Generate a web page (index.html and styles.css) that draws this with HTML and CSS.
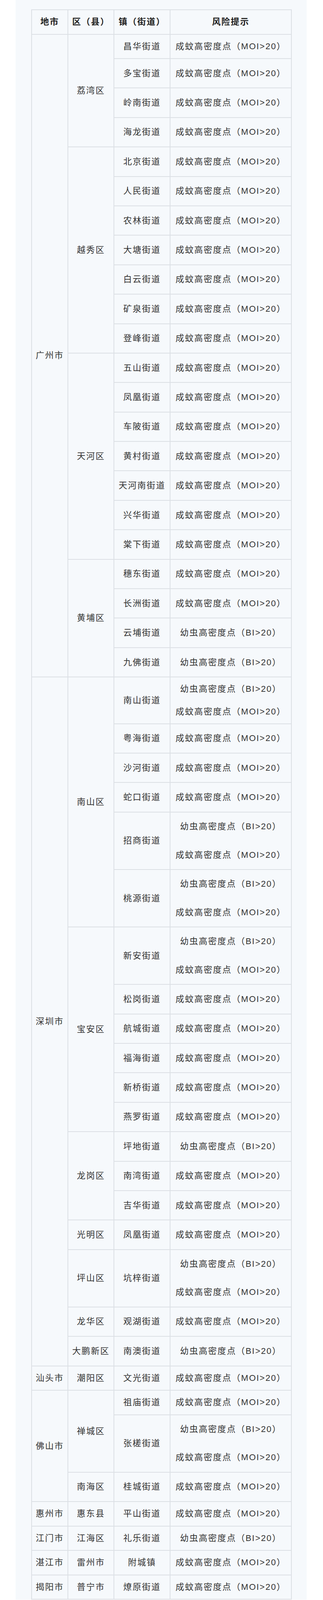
FILE: index.html
```html
<!DOCTYPE html>
<html lang="zh-CN">
<head>
<meta charset="utf-8">
<title>蚊媒密度风险提示</title>
<link rel="stylesheet" href="styles.css">
</head>
<body>
<div class="panel">
<div class="risk" role="table">
<div class="cell hd">地市</div><div class="cell hd">区（县）</div><div class="cell hd">镇（街道）</div><div class="cell hd">风险提示</div>

<div class="cell rs22">广州市</div><div class="cell rs4">荔湾区</div><div class="cell">昌华街道</div><div class="cell">成蚊高密度点（MOI&gt;20）</div>
<div class="cell">多宝街道</div><div class="cell">成蚊高密度点（MOI&gt;20）</div>
<div class="cell">岭南街道</div><div class="cell">成蚊高密度点（MOI&gt;20）</div>
<div class="cell">海龙街道</div><div class="cell">成蚊高密度点（MOI&gt;20）</div>
<div class="cell rs7">越秀区</div><div class="cell">北京街道</div><div class="cell">成蚊高密度点（MOI&gt;20）</div>
<div class="cell">人民街道</div><div class="cell">成蚊高密度点（MOI&gt;20）</div>
<div class="cell">农林街道</div><div class="cell">成蚊高密度点（MOI&gt;20）</div>
<div class="cell">大塘街道</div><div class="cell">成蚊高密度点（MOI&gt;20）</div>
<div class="cell">白云街道</div><div class="cell">成蚊高密度点（MOI&gt;20）</div>
<div class="cell">矿泉街道</div><div class="cell">成蚊高密度点（MOI&gt;20）</div>
<div class="cell">登峰街道</div><div class="cell">成蚊高密度点（MOI&gt;20）</div>
<div class="cell rs7">天河区</div><div class="cell">五山街道</div><div class="cell">成蚊高密度点（MOI&gt;20）</div>
<div class="cell">凤凰街道</div><div class="cell">成蚊高密度点（MOI&gt;20）</div>
<div class="cell">车陂街道</div><div class="cell">成蚊高密度点（MOI&gt;20）</div>
<div class="cell">黄村街道</div><div class="cell">成蚊高密度点（MOI&gt;20）</div>
<div class="cell">天河南街道</div><div class="cell">成蚊高密度点（MOI&gt;20）</div>
<div class="cell">兴华街道</div><div class="cell">成蚊高密度点（MOI&gt;20）</div>
<div class="cell">棠下街道</div><div class="cell">成蚊高密度点（MOI&gt;20）</div>
<div class="cell rs4">黄埔区</div><div class="cell">穗东街道</div><div class="cell">成蚊高密度点（MOI&gt;20）</div>
<div class="cell">长洲街道</div><div class="cell">成蚊高密度点（MOI&gt;20）</div>
<div class="cell">云埔街道</div><div class="cell">幼虫高密度点（BI&gt;20）</div>
<div class="cell">九佛街道</div><div class="cell">幼虫高密度点（BI&gt;20）</div>

<div class="cell rs19">深圳市</div><div class="cell rs6">南山区</div><div class="cell">南山街道</div><div class="cell dual"><span>幼虫高密度点（BI&gt;20）</span><span>成蚊高密度点（MOI&gt;20）</span></div>
<div class="cell">粤海街道</div><div class="cell">成蚊高密度点（MOI&gt;20）</div>
<div class="cell">沙河街道</div><div class="cell">成蚊高密度点（MOI&gt;20）</div>
<div class="cell">蛇口街道</div><div class="cell">成蚊高密度点（MOI&gt;20）</div>
<div class="cell">招商街道</div><div class="cell dual"><span>幼虫高密度点（BI&gt;20）</span><span>成蚊高密度点（MOI&gt;20）</span></div>
<div class="cell">桃源街道</div><div class="cell dual"><span>幼虫高密度点（BI&gt;20）</span><span>成蚊高密度点（MOI&gt;20）</span></div>
<div class="cell rs6">宝安区</div><div class="cell">新安街道</div><div class="cell dual"><span>幼虫高密度点（BI&gt;20）</span><span>成蚊高密度点（MOI&gt;20）</span></div>
<div class="cell">松岗街道</div><div class="cell">成蚊高密度点（MOI&gt;20）</div>
<div class="cell">航城街道</div><div class="cell">成蚊高密度点（MOI&gt;20）</div>
<div class="cell">福海街道</div><div class="cell">成蚊高密度点（MOI&gt;20）</div>
<div class="cell">新桥街道</div><div class="cell">成蚊高密度点（MOI&gt;20）</div>
<div class="cell">燕罗街道</div><div class="cell">成蚊高密度点（MOI&gt;20）</div>
<div class="cell rs3">龙岗区</div><div class="cell">坪地街道</div><div class="cell">幼虫高密度点（BI&gt;20）</div>
<div class="cell">南湾街道</div><div class="cell">成蚊高密度点（MOI&gt;20）</div>
<div class="cell">吉华街道</div><div class="cell">成蚊高密度点（MOI&gt;20）</div>
<div class="cell">光明区</div><div class="cell">凤凰街道</div><div class="cell">成蚊高密度点（MOI&gt;20）</div>
<div class="cell">坪山区</div><div class="cell">坑梓街道</div><div class="cell dual"><span>幼虫高密度点（BI&gt;20）</span><span>成蚊高密度点（MOI&gt;20）</span></div>
<div class="cell">龙华区</div><div class="cell">观湖街道</div><div class="cell">成蚊高密度点（MOI&gt;20）</div>
<div class="cell">大鹏新区</div><div class="cell">南澳街道</div><div class="cell">幼虫高密度点（BI&gt;20）</div>

<div class="cell">汕头市</div><div class="cell">潮阳区</div><div class="cell">文光街道</div><div class="cell">成蚊高密度点（MOI&gt;20）</div>

<div class="cell rs3">佛山市</div><div class="cell rs2">禅城区</div><div class="cell">祖庙街道</div><div class="cell">成蚊高密度点（MOI&gt;20）</div>
<div class="cell">张槎街道</div><div class="cell dual"><span>幼虫高密度点（BI&gt;20）</span><span>成蚊高密度点（MOI&gt;20）</span></div>
<div class="cell">南海区</div><div class="cell">桂城街道</div><div class="cell">成蚊高密度点（MOI&gt;20）</div>

<div class="cell">惠州市</div><div class="cell">惠东县</div><div class="cell">平山街道</div><div class="cell">成蚊高密度点（MOI&gt;20）</div>
<div class="cell">江门市</div><div class="cell">江海区</div><div class="cell">礼乐街道</div><div class="cell">幼虫高密度点（BI&gt;20）</div>
<div class="cell">湛江市</div><div class="cell">雷州市</div><div class="cell">附城镇</div><div class="cell">成蚊高密度点（MOI&gt;20）</div>
<div class="cell">揭阳市</div><div class="cell">普宁市</div><div class="cell">燎原街道</div><div class="cell">成蚊高密度点（MOI&gt;20）</div>
</div>
</div>
</body>
</html>
```

FILE: styles.css
```css
html, body {
  margin: 0;
  padding: 0;
  background: #ffffff;
}

.panel {
  margin-left: 40px;
  width: 746px;
  box-sizing: border-box;
  padding: 24px 40px 0;
  background: #f6f9fc;
}

.risk {
  display: grid;
  width: 668px;
  box-sizing: border-box;
  border-top: 2px solid #dce0e5;
  border-left: 2px solid #dce0e5;
  grid-template-columns: 93px 118px 144px 311px;
  grid-template-rows:
    62.5px 62.5px repeat(21, 75.4px)
    119.5px repeat(3, 75.4px) repeat(3, 147.1px) repeat(9, 75.4px)
    147.1px repeat(2, 75.4px) repeat(2, 62.5px) 147.1px 75.4px repeat(4, 62.5px);
  font-family: "Liberation Sans", "Noto Sans CJK SC", sans-serif;
  font-size: 22px;
  letter-spacing: 2px;
  line-height: 28px;
  color: #333333;
}

.cell {
  display: flex;
  align-items: center;
  justify-content: center;
  box-sizing: border-box;
  border-right: 2px solid #dce0e5;
  border-bottom: 2px solid #dce0e5;
  white-space: nowrap;
  text-align: center;
}

.hd {
  font-weight: bold;
  color: #222222;
}

.rs2 { grid-row: span 2; }
.rs3 { grid-row: span 3; }
.rs4 { grid-row: span 4; }
.rs6 { grid-row: span 6; }
.rs7 { grid-row: span 7; }
.rs19 { grid-row: span 19; }
.rs22 { grid-row: span 22; }

.dual {
  flex-direction: column;
  justify-content: space-around;
}

.dual span {
  display: block;
}
```
